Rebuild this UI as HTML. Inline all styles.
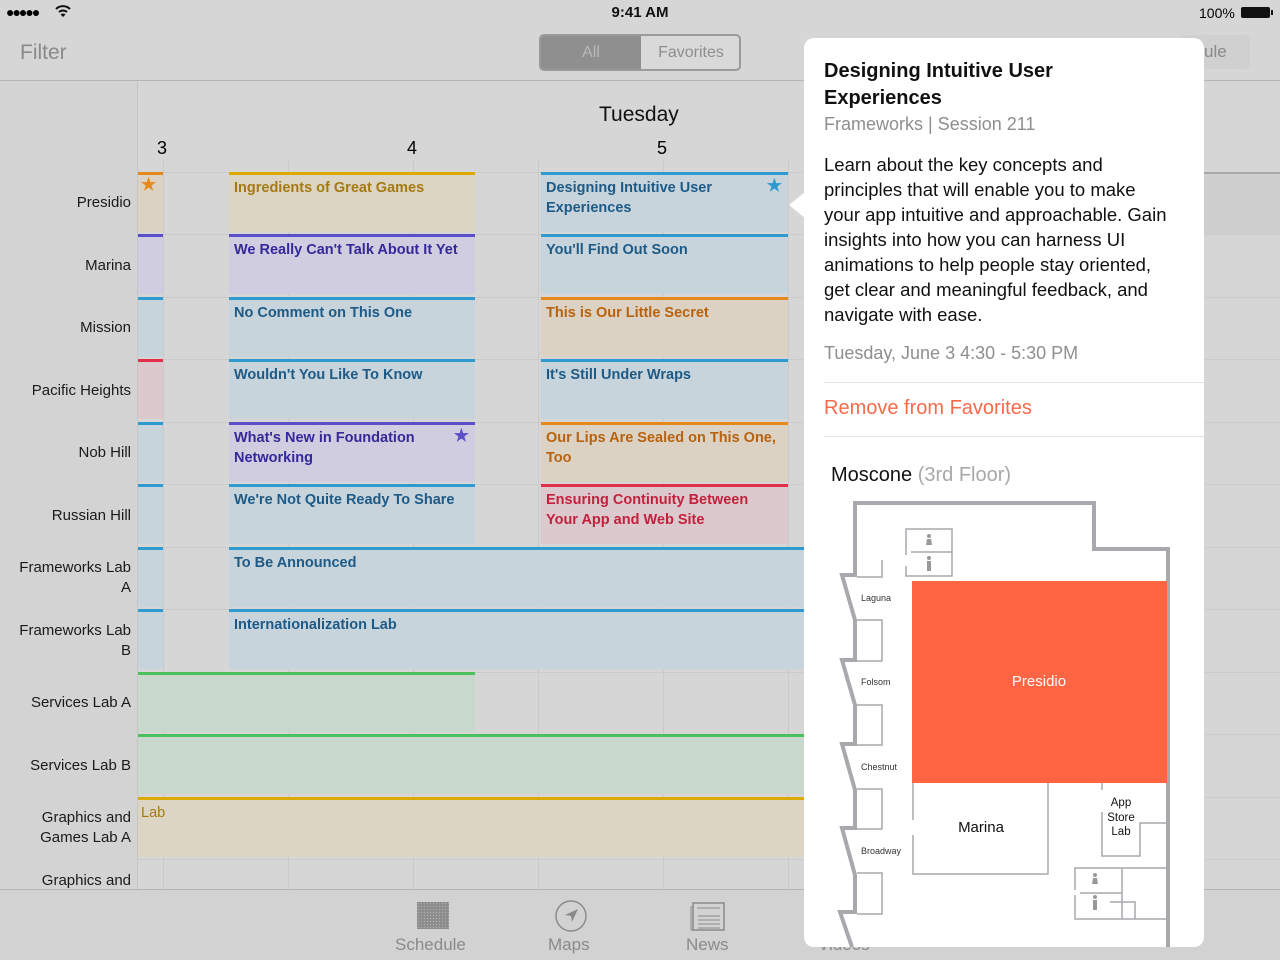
<!DOCTYPE html><html><head><style>
*{margin:0;padding:0;box-sizing:border-box}
body{width:1280px;height:960px;overflow:hidden;background:#d6d6d6;font-family:"Liberation Sans",sans-serif;position:relative}
.a{position:absolute}
.lbl{position:absolute;right:1149px;width:135px;text-align:right;font-size:15px;color:#1a1a1a;line-height:20px}
.ev{position:absolute;height:60px;border-top:3px solid;font-size:14.5px;font-weight:bold;padding:3px 5px;line-height:20px}
.b{border-color:#2d9ad0;background:#c8d4dc;color:#1d5a86}
.p{border-color:#5b4fc9;background:#d0cde0;color:#33299a}
.y{border-color:#dcaa00;background:#dcd5c3;color:#a57a12}
.o{border-color:#e5891c;background:#dcd2c4;color:#b8620e}
.r{border-color:#e3304a;background:#dcc9cd;color:#c41f3c}
.g{border-color:#4cc05c;background:#c9d8cd}
.vl{position:absolute;top:160px;width:1px;height:729px;background:#cacaca}
.hl{position:absolute;left:137px;width:1143px;height:1px;background:#cbcbcb}
.star{position:absolute;right:6px;top:1px;font-size:17px}
</style></head><body>
<!-- status bar -->
<div class="a" style="left:6px;top:4px;font-size:14px;letter-spacing:-2px">●●●●●</div>
<svg class="a" style="left:55px;top:4px" width="16" height="14"><path d="M1 5 A10 10 0 0 1 15 5" fill="none" stroke="#111" stroke-width="2"/><path d="M4 8 A6 6 0 0 1 12 8" fill="none" stroke="#111" stroke-width="2"/><path d="M8 13 L5.5 10.5 A3.5 3.5 0 0 1 10.5 10.5Z" fill="#111"/></svg>
<div class="a" style="left:0;width:1280px;top:4px;text-align:center;font-size:15px;font-weight:bold;color:#111">9:41 AM</div>
<div class="a" style="left:1199px;top:5px;font-size:14px">100%</div>
<div class="a" style="left:1241px;top:7px;width:29px;height:11px;background:#111;border-radius:2px"></div>
<div class="a" style="left:1271px;top:10px;width:2px;height:5px;background:#111"></div>
<!-- nav -->
<div class="a" style="left:20px;top:41px;font-size:21px;color:#8a8a8a">Filter</div>
<div class="a" style="left:539px;top:34px;width:202px;height:37px;border:2px solid #9a9a9a;border-radius:5px;overflow:hidden;background:#d9d9d9">
<div class="a" style="left:0;top:0;width:100px;height:33px;background:#8f8f8f;color:#b9b9b9;text-align:center;font-size:16px;line-height:33px">All</div>
<div class="a" style="left:100px;top:0;width:100px;height:33px;color:#8e8e8e;text-align:center;font-size:16px;line-height:33px">Favorites</div></div>
<div class="a" style="left:1180px;top:35px;width:70px;height:34px;background:#d0d0d0;border-radius:5px;font-size:17px;color:#8a8a8a;padding:7px 0 0 24px">ule</div>
<div class="a" style="left:0;top:80px;width:1280px;height:1px;background:#b5b5b5"></div>
<div class="a" style="left:0;top:81px;width:137px;height:808px;background:#d3d3d3"></div>
<div class="a" style="left:137px;top:81px;width:1px;height:808px;background:#c6c6c6"></div>
<div class="a" style="left:599px;top:103px;font-size:21px;color:#111">Tuesday</div>
<div class="a" style="left:157px;top:138px;font-size:18px">3</div>
<div class="a" style="left:407px;top:138px;font-size:18px">4</div>
<div class="a" style="left:657px;top:138px;font-size:18px">5</div>
<div class="vl" style="left:163px"></div><div class="vl" style="left:288px"></div><div class="vl" style="left:413px"></div><div class="vl" style="left:538px"></div><div class="vl" style="left:663px"></div><div class="vl" style="left:788px"></div>
<div class="hl" style="top:172px"></div><div class="hl" style="top:234px"></div><div class="hl" style="top:297px"></div><div class="hl" style="top:359px"></div><div class="hl" style="top:422px"></div><div class="hl" style="top:484px"></div><div class="hl" style="top:547px"></div><div class="hl" style="top:609px"></div><div class="hl" style="top:672px"></div><div class="hl" style="top:734px"></div><div class="hl" style="top:797px"></div><div class="hl" style="top:859px"></div>
<div class="a" style="left:1203px;top:172px;width:77px;height:62px;background:#cfcfcf;border-top:2px solid #a8a8a8"></div>
<!-- labels -->
<div class="lbl" style="top:193px">Presidio</div>
<div class="lbl" style="top:256px">Marina</div>
<div class="lbl" style="top:318px">Mission</div>
<div class="lbl" style="top:381px">Pacific Heights</div>
<div class="lbl" style="top:443px">Nob Hill</div>
<div class="lbl" style="top:506px">Russian Hill</div>
<div class="lbl" style="top:558px">Frameworks Lab<br>A</div>
<div class="lbl" style="top:621px">Frameworks Lab<br>B</div>
<div class="lbl" style="top:693px">Services Lab A</div>
<div class="lbl" style="top:756px">Services Lab B</div>
<div class="lbl" style="top:808px">Graphics and<br>Games Lab A</div>
<div class="lbl" style="top:871px">Graphics and</div>
<!-- events -->
<div class="ev o" style="left:138px;top:172px;width:25px"><span style="position:absolute;left:3px;top:0;font-size:17px;color:#e5891c">★</span></div>
<div class="ev y" style="left:229px;top:172px;width:246px">Ingredients of Great Games</div>
<div class="ev b" style="left:541px;top:172px;width:247px">Designing Intuitive User<br>Experiences<span class="star" style="color:#2d9ad0">★</span></div>
<div class="ev p" style="left:138px;top:234px;width:25px"></div>
<div class="ev p" style="left:229px;top:234px;width:246px">We Really Can't Talk About It Yet</div>
<div class="ev b" style="left:541px;top:234px;width:247px">You'll Find Out Soon</div>
<div class="ev b" style="left:138px;top:297px;width:25px"></div>
<div class="ev b" style="left:229px;top:297px;width:246px">No Comment on This One</div>
<div class="ev o" style="left:541px;top:297px;width:247px">This is Our Little Secret</div>
<div class="ev r" style="left:138px;top:359px;width:25px"></div>
<div class="ev b" style="left:229px;top:359px;width:246px">Wouldn't You Like To Know</div>
<div class="ev b" style="left:541px;top:359px;width:247px">It's Still Under Wraps</div>
<div class="ev b" style="left:138px;top:422px;width:25px"></div>
<div class="ev p" style="left:229px;top:422px;width:246px">What's New in Foundation<br>Networking<span class="star" style="color:#5b4fc9">★</span></div>
<div class="ev o" style="left:541px;top:422px;width:247px">Our Lips Are Sealed on This One,<br>Too</div>
<div class="ev b" style="left:138px;top:484px;width:25px"></div>
<div class="ev b" style="left:229px;top:484px;width:246px">We're Not Quite Ready To Share</div>
<div class="ev r" style="left:541px;top:484px;width:247px">Ensuring Continuity Between<br>Your App and Web Site</div>
<div class="ev b" style="left:138px;top:547px;width:25px"></div>
<div class="ev b" style="left:229px;top:547px;width:580px">To Be Announced</div>
<div class="ev b" style="left:138px;top:609px;width:25px"></div>
<div class="ev b" style="left:229px;top:609px;width:580px">Internationalization Lab</div>
<div class="ev g" style="left:138px;top:672px;width:337px"></div>
<div class="ev g" style="left:138px;top:734px;width:670px"></div>
<div class="ev y" style="left:138px;top:797px;width:670px;padding-left:3px;font-weight:normal">Lab</div>
<!-- tab bar -->
<div class="a" style="left:0;top:889px;width:1280px;height:71px;background:#d3d2d2;border-top:1px solid #b4b4b4"></div>
<div class="a" style="left:417px;top:902px;width:32px;height:27px;background:#8d8d8d;background-image:radial-gradient(#b0b0b0 0.7px,transparent 0.8px);background-size:3px 3px"></div>
<div class="a" style="left:395px;top:935px;font-size:17px;color:#8a8a8a">Schedule</div>
<svg class="a" style="left:554px;top:900px" width="34" height="34"><circle cx="17" cy="16" r="15" fill="none" stroke="#8a8a8a" stroke-width="1.5"/><path d="M24 9 L11 15 L17 16 L18 22 Z" fill="#8a8a8a"/></svg>
<div class="a" style="left:548px;top:935px;font-size:17px;color:#8a8a8a">Maps</div>
<svg class="a" style="left:690px;top:902px" width="36" height="30"><rect x="3" y="1" width="31" height="27" fill="none" stroke="#8a8a8a" stroke-width="1.5"/><path d="M3 5H1V28H3M7 6H30M8 14H30M8 18H30M8 22H30M8 26H30" stroke="#8a8a8a" fill="none"/></svg>
<div class="a" style="left:686px;top:935px;font-size:17px;color:#8a8a8a">News</div>
<div class="a" style="left:818px;top:935px;font-size:17px;color:#8a8a8a">Videos</div>
<!-- popover -->
<div class="a" style="left:789px;top:192px;width:0;height:0;border-top:13px solid transparent;border-bottom:13px solid transparent;border-right:16px solid #fff"></div>
<div class="a" style="left:804px;top:38px;width:400px;height:909px;background:#fff;border-radius:10px;overflow:hidden">
<div class="a" style="left:20px;top:20px;font-size:20px;font-weight:bold;line-height:27px;color:#111">Designing Intuitive User<br>Experiences</div>
<div class="a" style="left:20px;top:76px;font-size:18px;color:#8e8e8e">Frameworks | Session 211</div>
<div class="a" style="left:20px;top:114px;width:375px;font-size:18.5px;line-height:25px;color:#111;white-space:nowrap">Learn about the key concepts and<br>principles that will enable you to make<br>your app intuitive and approachable. Gain<br>insights into how you can harness UI<br>animations to help people stay oriented,<br>get clear and meaningful feedback, and<br>navigate with ease.</div>
<div class="a" style="left:20px;top:305px;font-size:18px;color:#8e8e8e">Tuesday, June 3 4:30 - 5:30 PM</div>
<div class="a" style="left:20px;top:344px;width:380px;height:1px;background:#e2e2e2"></div>
<div class="a" style="left:20px;top:359px;font-size:20px;color:#f86a4a">Remove from Favorites</div>
<div class="a" style="left:20px;top:398px;width:380px;height:1px;background:#e2e2e2"></div>
<div class="a" style="left:27px;top:426px;font-size:20px;color:#111">Moscone <span style="color:#a8a8a8">(3rd Floor)</span></div>
</div>
<svg class="a" style="left:0;top:0" width="1280" height="960">
<g fill="none" stroke="#a9a9ad">
<path stroke-width="4" d="M852 947 L840 912 L855 912 L855 875 L842 828 L855 828 L855 790 L842 744 L855 744 L855 705 L842 660 L855 660 L855 620 L842 575 L855 575 L855 503 L1094 503 L1094 549 L1168 549 L1168 947"/>
<g stroke-width="1.5">
<path d="M857 577H882V560M857 620H882V661H857M857 705H882V745H857M857 789H882V829H857M857 873H882V914H857"/>
<path d="M906 555V529H952V576H906V566M911 552H952"/>
<path d="M913 783V820M913 835V874H1048V783"/>
<path d="M1102 783V790M1102 812V856H1140V823H1167"/>
<path d="M1075 890V868H1167M1075 895V919H1167M1122 868V919M1080 893H1122M1110 902H1135V919"/>
</g></g>
<rect x="912" y="581" width="255" height="202" fill="#ff6443"/>
<text x="1039" y="686" font-family="Liberation Sans" font-size="15" fill="#fff" text-anchor="middle">Presidio</text>
<text x="981" y="832" font-family="Liberation Sans" font-size="15" fill="#111" text-anchor="middle">Marina</text>
<g font-family="Liberation Sans" font-size="11.5" fill="#111" text-anchor="middle"><text x="1121" y="806">App</text><text x="1121" y="821">Store</text><text x="1121" y="835">Lab</text></g>
<g font-family="Liberation Sans" font-size="9" fill="#333"><text x="861" y="601">Laguna</text><text x="861" y="685">Folsom</text><text x="861" y="770">Chestnut</text><text x="861" y="854">Broadway</text></g>
<g fill="#999"><circle cx="929" cy="536" r="2"/><path d="M927 539h4l1 6h-6z"/><circle cx="929" cy="558" r="2"/><rect x="927" y="561" width="4" height="10"/><circle cx="1095" cy="875" r="2"/><path d="M1093 878h4l1 6h-6z"/><circle cx="1095" cy="897" r="2"/><rect x="1093" y="900" width="4" height="10"/></g>
</svg>
</body></html>
